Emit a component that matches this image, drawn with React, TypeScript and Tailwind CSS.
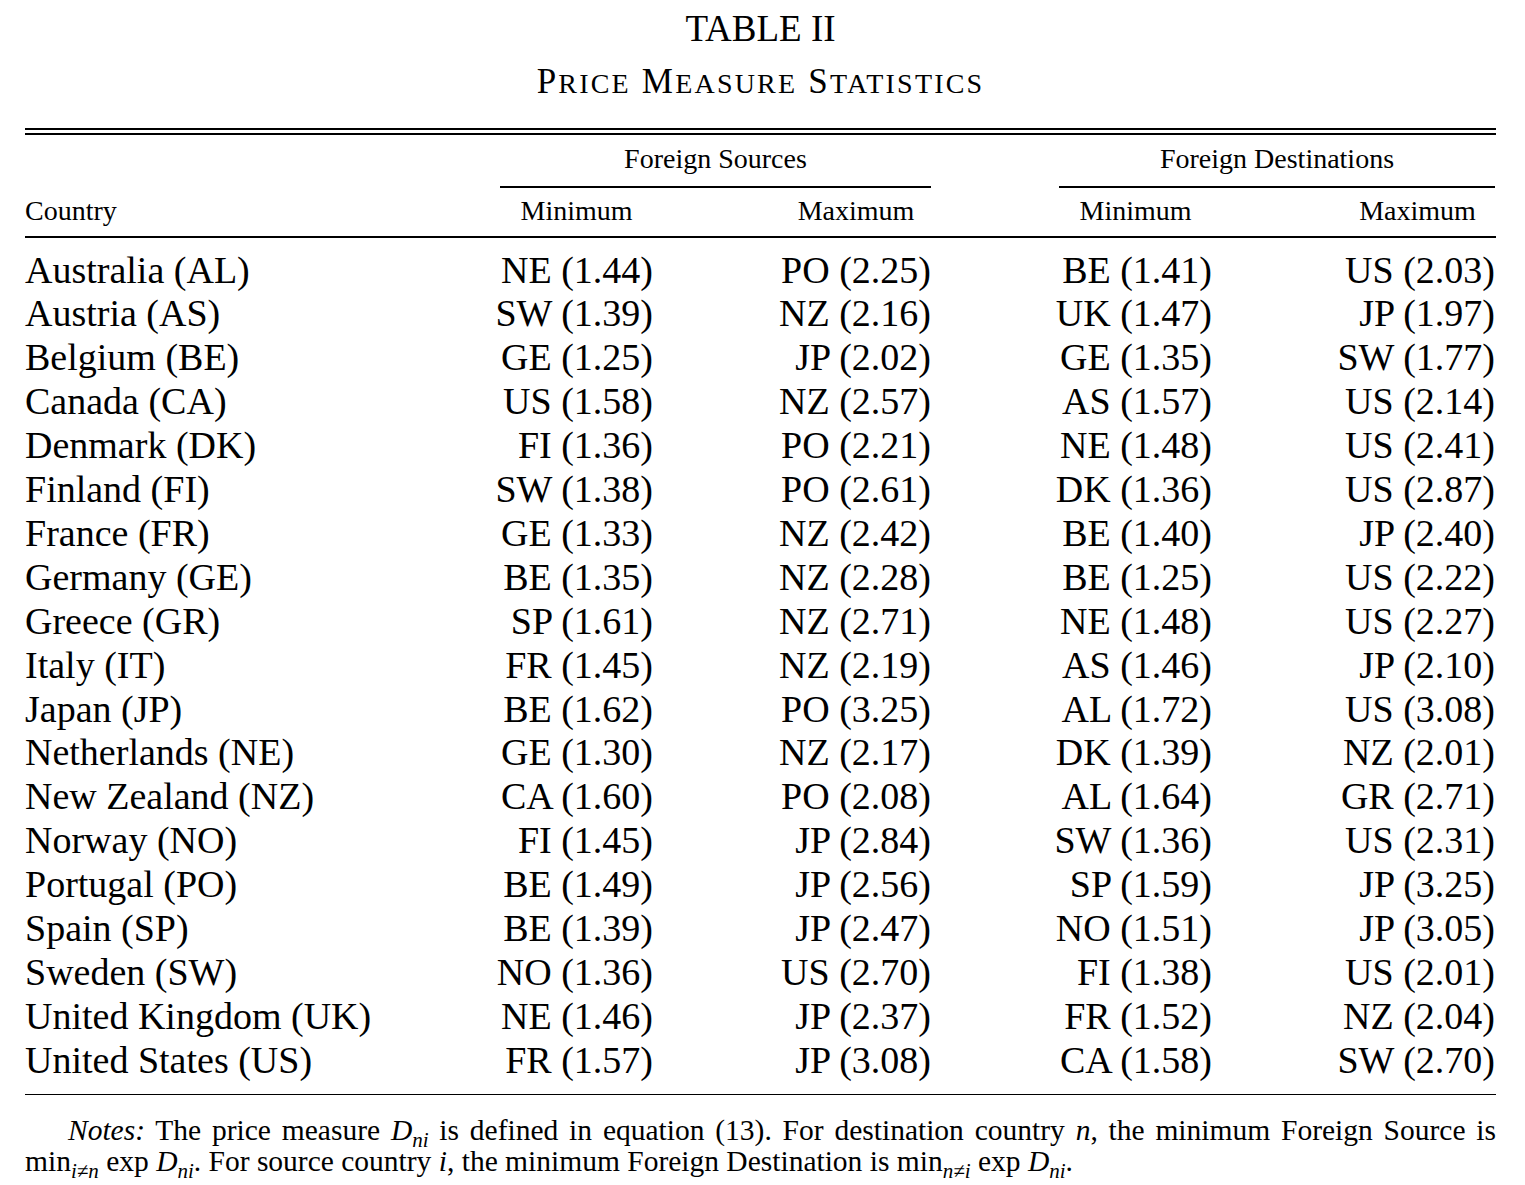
const rows: [string, string, string, string, string][] = [
  ['Australia (AL)', 'NE (1.44)', 'PO (2.25)', 'BE (1.41)', 'US (2.03)'],
  ['Austria (AS)', 'SW (1.39)', 'NZ (2.16)', 'UK (1.47)', 'JP (1.97)'],
  ['Belgium (BE)', 'GE (1.25)', 'JP (2.02)', 'GE (1.35)', 'SW (1.77)'],
  ['Canada (CA)', 'US (1.58)', 'NZ (2.57)', 'AS (1.57)', 'US (2.14)'],
  ['Denmark (DK)', 'FI (1.36)', 'PO (2.21)', 'NE (1.48)', 'US (2.41)'],
  ['Finland (FI)', 'SW (1.38)', 'PO (2.61)', 'DK (1.36)', 'US (2.87)'],
  ['France (FR)', 'GE (1.33)', 'NZ (2.42)', 'BE (1.40)', 'JP (2.40)'],
  ['Germany (GE)', 'BE (1.35)', 'NZ (2.28)', 'BE (1.25)', 'US (2.22)'],
  ['Greece (GR)', 'SP (1.61)', 'NZ (2.71)', 'NE (1.48)', 'US (2.27)'],
  ['Italy (IT)', 'FR (1.45)', 'NZ (2.19)', 'AS (1.46)', 'JP (2.10)'],
  ['Japan (JP)', 'BE (1.62)', 'PO (3.25)', 'AL (1.72)', 'US (3.08)'],
  ['Netherlands (NE)', 'GE (1.30)', 'NZ (2.17)', 'DK (1.39)', 'NZ (2.01)'],
  ['New Zealand (NZ)', 'CA (1.60)', 'PO (2.08)', 'AL (1.64)', 'GR (2.71)'],
  ['Norway (NO)', 'FI (1.45)', 'JP (2.84)', 'SW (1.36)', 'US (2.31)'],
  ['Portugal (PO)', 'BE (1.49)', 'JP (2.56)', 'SP (1.59)', 'JP (3.25)'],
  ['Spain (SP)', 'BE (1.39)', 'JP (2.47)', 'NO (1.51)', 'JP (3.05)'],
  ['Sweden (SW)', 'NO (1.36)', 'US (2.70)', 'FI (1.38)', 'US (2.01)'],
  ['United Kingdom (UK)', 'NE (1.46)', 'JP (2.37)', 'FR (1.52)', 'NZ (2.04)'],
  ['United States (US)', 'FR (1.57)', 'JP (3.08)', 'CA (1.58)', 'SW (2.70)'],
];

const gridCols = 'grid grid-cols-[347px_153px_150px_153px_155px] gap-x-[128px]';

// small caps word: first letter big, rest smaller uppercase
const SmallCapsWord = ({ word }: { word: string }) => (
  <span>
    {word[0]}
    <span className="text-[28px] leading-none">{word.slice(1).toUpperCase()}</span>
  </span>
);

const Sub = ({ children }: { children: React.ReactNode }) => (
  <span className="relative top-[7px] text-[21px] leading-none italic">{children}</span>
);

const Dni = () => (
  <>
    <span className="italic">D</span>
    <Sub>ni</Sub>
  </>
);

const Cell = ({ children }: { children: React.ReactNode }) => (
  <div className="flex justify-end">{children}</div>
);

export default function App() {
  return (
    <div className="w-[1525px] min-h-[1185px] bg-white pl-[25px] text-black font-['Liberation_Serif','Times_New_Roman',serif]">
      <div className="w-[1471px]">
        {/* Caption */}
        <div className="pt-[10px] text-center text-[37px] leading-[37px]">TABLE II</div>
        <div className="mt-[18px] text-center text-[35px] leading-[34px] tracking-[2.2px] whitespace-nowrap">
          <SmallCapsWord word="Price" /> <SmallCapsWord word="Measure" />{' '}
          <SmallCapsWord word="Statistics" />
        </div>

        {/* Top double rule */}
        <div className="mt-[29px] h-[2px] bg-black" />
        <div className="mt-[3px] h-[2px] bg-black" />

        {/* Header */}
        <div className={`${gridCols} text-[28px] leading-[28px] pt-[10px] whitespace-nowrap`}>
          <div />
          <div className="col-span-2 text-center">Foreign Sources</div>
          <div className="col-span-2 text-center">Foreign Destinations</div>
          <div />
          <div className="col-span-2 mt-[13px] h-[1.5px] bg-black" />
          <div className="col-span-2 mt-[13px] h-[1.5px] bg-black" />
          <div className="mt-[9px]">Country</div>
          <div className="mt-[9px] text-center">Minimum</div>
          <div className="mt-[9px] text-center">Maximum</div>
          <div className="mt-[9px] text-center">Minimum</div>
          <div className="mt-[9px] text-center">Maximum</div>
        </div>
        <div className="mt-[11px] h-[2px] bg-black" />

        {/* Body */}
        <div className={`${gridCols} pt-[11px] text-[38px] leading-[43.9px] whitespace-nowrap`}>
          {rows.map((r) => (
            <div key={r[0]} className="contents">
              <div>{r[0]}</div>
              <Cell>{r[1]}</Cell>
              <Cell>{r[2]}</Cell>
              <Cell>{r[3]}</Cell>
              <Cell>{r[4]}</Cell>
            </div>
          ))}
        </div>
        <div className="mt-[11px] h-[1.5px] bg-black" />

        {/* Notes */}
        <p className="mt-[20px] text-[29.5px] leading-[31px] text-justify indent-[43px]">
          <span className="italic">Notes:</span> The price measure <Dni /> is defined in equation
          (13). For destination country <span className="italic">n</span>, the minimum Foreign
          Source is{' '}
          <span className="whitespace-nowrap">
            min<Sub>i≠n</Sub>
          </span>{' '}
          exp <Dni />. For source country <span className="italic">i</span>, the minimum Foreign
          Destination is{' '}
          <span className="whitespace-nowrap">
            min<Sub>n≠i</Sub>
          </span>{' '}
          exp <Dni />.
        </p>
      </div>
    </div>
  );
}
